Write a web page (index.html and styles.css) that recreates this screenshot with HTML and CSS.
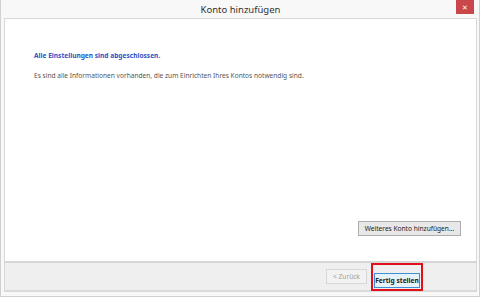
FILE: index.html
```html
<!DOCTYPE HTML>
<html>
<head>
	<meta http-equiv="Content-Type" content="text/html; charset=utf-8">
	<title>Konto hinzufügen</title>
	<link rel="stylesheet" href="styles.css">
</head>
<body>
<div class="window">
	<div class="titlebar">
		<span class="title">Konto hinzufügen</span>
		<div class="close">&#x2715;</div>
	</div>

	<div class="panel">
		<div class="main">
			<div class="h">Alle Einstellungen sind abgeschlossen.</div>
			<div class="i">Es sind alle Informationen vorhanden, die zum Einrichten Ihres Kontos notwendig sind.</div>
			<div class="more"><button class="btn">Weiteres Konto hinzufügen...</button></div>
		</div>
		<div class="footer">
			<button class="btn back" disabled>&lt; Zurück</button>
			<div class="mark"><button class="btn finish">Fertig stellen</button></div>
		</div>
	</div>
</div>
</body>
</html>
```

FILE: styles.css
```css
body {
	margin:0;
	background:#fff;
	font-family:"Noto Sans", "DejaVu Sans", sans-serif;
	}
.window {
	box-sizing:border-box;
	width:480px;
	height:297px;
	display:flex;
	flex-direction:column;
	background:#f8f8f8;
	border:1px solid #d0d0d0;
	border-top:none;
	padding:0 2px 4px 3px;
	}
.titlebar {
	position:relative;
	height:18px;
	display:flex;
	align-items:center;
	justify-content:center;
	}
.title {
	font-size:9.5px;
	color:#333;
	}
.close {
	position:absolute;
	right:3px;
	top:0;
	width:18px;
	height:14px;
	background:#c9474a;
	color:#fff;
	font-size:7px;
	font-weight:bold;
	display:flex;
	align-items:center;
	justify-content:center;
	}
.panel {
	flex:1;
	display:flex;
	flex-direction:column;
	border:1px solid #d8d8d8;
	background:#fff;
	}
.main {
	flex:1;
	display:flex;
	flex-direction:column;
	padding:32px 15px 25px 29px;
	border-bottom:2px solid #d6d6d6;
	}
.h {
	color:#2a56c6;
	font-size:6.6px;
	font-weight:bold;
	}
.i {
	color:#555;
	font-size:6.6px;
	margin-top:11px;
	}
.more {
	margin-top:auto;
	display:flex;
	justify-content:flex-end;
	}
.btn {
	font-family:inherit;
	font-size:6.6px;
	color:#222;
	background:#e8e8e8;
	border:1px solid #adadad;
	height:15px;
	padding:0;
	margin:0;
	white-space:nowrap;
	text-align:center;
	}
.more .btn {
	width:103px;
	}
.footer {
	height:27px;
	display:flex;
	align-items:center;
	justify-content:flex-end;
	background:#efefef;
	border-bottom:1px solid #dcdcdc;
	padding-right:53px;
	}
.back {
	width:41px;
	color:#a0a0a0;
	background:#f2f2f2;
	border-color:#d8d8d8;
	}
.mark {
	margin-left:4px;
	border:2px solid #e3101b;
	padding:1px;
	}
.finish {
	width:46px;
	border-color:#3c8fd6;
	background:#e5f1fb;
	font-weight:bold;
	}
```
